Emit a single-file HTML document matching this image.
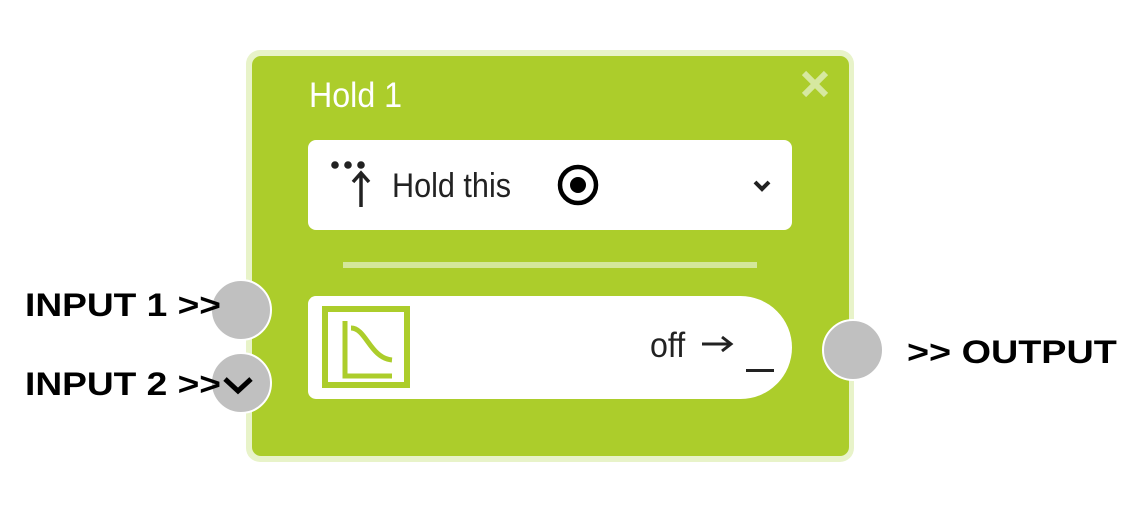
<!DOCTYPE html>
<html><head><style>
html,body{margin:0;padding:0;width:1139px;height:510px;background:#fff;overflow:hidden;position:relative;font-family:"Liberation Sans",sans-serif}
.abs{position:absolute}
.n{display:inline-block;transform:scaleX(0.9);transform-origin:left center;white-space:nowrap}
.lbl{font-weight:bold;font-size:32px;color:#000;white-space:nowrap;transform-origin:left center}
.port{position:absolute;width:62px;height:62px;border-radius:50%;background:#c0c0c0;border:2px solid #fff;box-sizing:border-box}
</style></head><body>
<div class="abs" style="left:246px;top:50px;width:608px;height:412px;background:#e8f3c9;border-radius:14px"></div>
<div class="abs" style="left:252px;top:56px;width:597px;height:400px;background:#accd2b;border-radius:9px"></div>
<div class="abs" style="left:309px;top:76px;font-size:35px;color:#fff;line-height:40px"><span class="n" style="transform:scaleX(0.92)">Hold 1</span></div>
<svg class="abs" style="left:800px;top:70px" width="32" height="30"><path d="M4 3 L26 25 M26 3 L4 25" stroke="#d6e8a0" stroke-width="6"/></svg>
<div class="abs" style="left:308px;top:140px;width:484px;height:90px;background:#fff;border-radius:8px"></div>
<svg class="abs" style="left:325px;top:155px" width="55" height="55">
<circle cx="10" cy="10" r="3.8" fill="#222"/><circle cx="23" cy="10" r="3.8" fill="#222"/><circle cx="36" cy="10" r="3.8" fill="#222"/>
<path d="M36 18 V52 M28 27 L36 18 L44 27" stroke="#222" stroke-width="3.5" fill="none"/></svg>
<div class="abs" style="left:392px;top:166px;font-size:34px;color:#222;line-height:40px"><span class="n">Hold this</span></div>
<svg class="abs" style="left:555px;top:162px" width="48" height="48"><circle cx="23" cy="23" r="18" stroke="#000" stroke-width="4.5" fill="none"/><circle cx="23" cy="23" r="8" fill="#000"/></svg>
<svg class="abs" style="left:752px;top:178px" width="20" height="16"><path d="M3 4 L10 11 L17 4" stroke="#222" stroke-width="4" fill="none"/></svg>
<div class="abs" style="left:343px;top:262px;width:414px;height:6px;background:#d4e79a"></div>
<div class="abs" style="left:308px;top:296px;width:484px;height:103px;background:#fff;border-radius:8px 52px 52px 8px"></div>
<div class="abs" style="left:322px;top:306px;width:88px;height:82px;border:6px solid #accd2b;box-sizing:border-box"></div>
<svg class="abs" style="left:330px;top:318px" width="70" height="66"><path d="M15 3 V58 H62" stroke="#accd2b" stroke-width="5" fill="none"/><path d="M21 10 C36 10 40 40 62 42" stroke="#accd2b" stroke-width="5" fill="none"/></svg>
<div class="abs" style="left:650px;top:326px;font-size:35px;color:#222;line-height:40px"><span class="n" style="transform:scaleX(0.92)">off</span></div>
<svg class="abs" style="left:700px;top:334px" width="36" height="20"><path d="M2 10 H30 M22 3 L31 10 L22 17" stroke="#222" stroke-width="3" fill="none"/></svg>
<div class="abs" style="left:746px;top:369px;width:28px;height:3px;background:#222"></div>
<div class="port" style="left:210px;top:279px"></div>
<div class="port" style="left:210px;top:352px"></div>
<svg class="abs" style="left:220px;top:373px" width="40" height="26"><path d="M5 6 L18 18 L31 6" stroke="#000" stroke-width="5" fill="none"/></svg>
<div class="port" style="left:822px;top:319px"></div>
<div class="abs lbl" style="left:25px;top:287px;transform:scaleX(1.16)">INPUT 1 &gt;&gt;</div>
<div class="abs lbl" style="left:25px;top:366px;transform:scaleX(1.16)">INPUT 2 &gt;&gt;</div>
<div class="abs lbl" style="left:907px;top:334px;transform:scaleX(1.18)">&gt;&gt; OUTPUT</div>
</body></html>
